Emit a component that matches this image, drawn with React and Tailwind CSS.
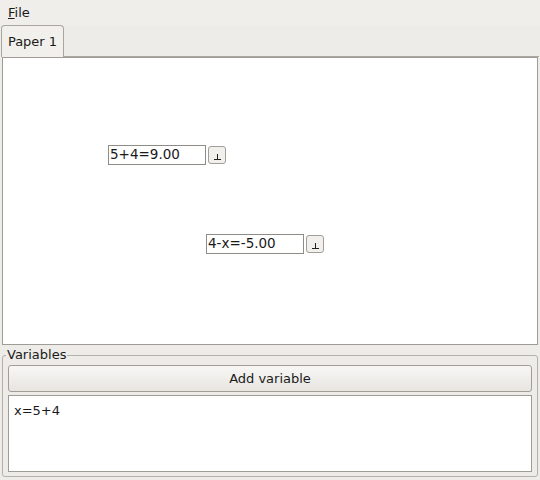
export default function App() {
  const font = { fontFamily: '"DejaVu Sans", sans-serif' };
  return (
    <div className="w-[540px] h-[480px] bg-[#edece8] text-[13px] text-[#1a1a1a] flex flex-col overflow-hidden" style={font}>
      <div className="h-[25px] flex items-center px-[8px] bg-[#efeeea]">
        <span><span className="underline">F</span>ile</span>
      </div>
      <div className="flex px-[1px] h-[32px] items-end">
        <div className="h-[32px] w-[63px] border border-b-0 border-[#a8a69f] rounded-t-[4px] bg-[#f1f0ec] flex items-center justify-center">
          Paper 1
        </div>
        <div className="flex-1 border-b border-[#a8a69f] h-full"></div>
      </div>
      <div className="mx-[2px] h-[288px] bg-white border border-[#9e9c95] relative">
        <div className="absolute left-[105px] top-[87px] flex items-center gap-[2px]">
          <div className="w-[98px] h-[20px] border border-[#8e8c86] bg-white flex items-center px-[1px] leading-none text-[13.5px]">5+4=9.00</div>
          <div className="w-[18px] h-[18px] border border-[#a09e97] rounded-[3px] bg-[#f1f0ec] flex items-end justify-center pb-[3px]">
            <svg width="7" height="6" viewBox="0 0 7 6"><path d="M3.5 0V5M0 5.5H7" stroke="#222" strokeWidth="1" /></svg>
          </div>
        </div>
        <div className="absolute left-[203px] top-[176px] flex items-center gap-[2px]">
          <div className="w-[98px] h-[20px] border border-[#8e8c86] bg-white flex items-center px-[1px] leading-none text-[13.5px]">4-x=-5.00</div>
          <div className="w-[18px] h-[18px] border border-[#a09e97] rounded-[3px] bg-[#f1f0ec] flex items-end justify-center pb-[3px]">
            <svg width="7" height="6" viewBox="0 0 7 6"><path d="M3.5 0V5M0 5.5H7" stroke="#222" strokeWidth="1" /></svg>
          </div>
        </div>
      </div>
      <div className="relative mt-[10px] mx-[2px] h-[122px] border border-[#b3b1aa] rounded-[3px] px-[5px] pt-[9px]">
        <div className="absolute left-[3px] top-[-10px] bg-[#edece8] px-[1px] leading-[18px]">Variables</div>
        <div className="h-[27px] border border-[#a09e97] rounded-[3px] bg-gradient-to-b from-[#f8f7f5] to-[#e6e5e0] flex items-center justify-center">
          Add variable
        </div>
        <div className="mt-[3px] h-[77px] bg-white border border-[#9e9c95] px-[5px] pt-[5px]">x=5+4</div>
      </div>
    </div>
  );
}
